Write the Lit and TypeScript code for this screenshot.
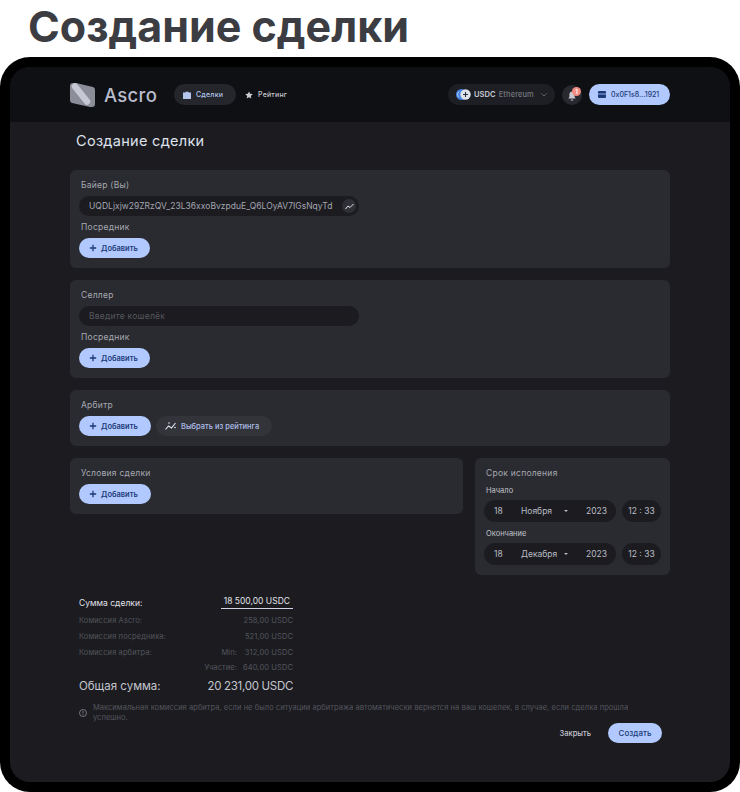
import { LitElement, html, css } from "lit";
import { customElement } from "lit/decorators.js";

const plus = html`<svg class="plus" viewBox="0 0 10 10"><path d="M5 1v8M1 5h8" /></svg>`;

@customElement("app-root")
export class AppRoot extends LitElement {
  static styles = css`
    :host { display: block; width: 740px; height: 792px; overflow: hidden; background: #fff; font-family: Inter, "Noto Sans", sans-serif; }
    * { box-sizing: border-box; }
    h1 { margin: 0; height: 57px; padding-left: 28px; font: 700 43px/52px Inter, "Liberation Sans", sans-serif; color: #3c3d42; white-space: nowrap; }
    .frame { height: 735px; background: #000; border-radius: 30px; padding: 10px; }
    .screen { height: 715px; background: #1b1b20; border-radius: 20px; overflow: hidden; display: flex; flex-direction: column; }
    header { height: 55px; flex: none; background: #0f1014; display: flex; align-items: center; padding: 0 60px; }
    .logo { display: flex; align-items: center; gap: 9px; width: 104px; font-size: 18.5px; font-weight: 500; color: #b9bdcc; letter-spacing: 0.3px; }
    .logo svg { width: 25px; height: 25px; flex: none; }
    .nav { height: 21px; display: flex; align-items: center; gap: 5px; border-radius: 11px; font-size: 7px; font-weight: 500; letter-spacing: .2px; }
    .nav svg { width: 8px; height: 8px; flex: none; }
    .nav.on { width: 62px; padding-left: 9px; background: #25262b; color: #b4c6ee; gap: 5px; }
    .nav.off { margin-left: 9px; color: #c8cad2; gap: 5px; }
    .spacer { flex: 1; }
    .chain { width: 107px; height: 21px; background: #1e1f24; border-radius: 11px; display: flex; align-items: center; padding-left: 8px; font-size: 7.5px; font-weight: 600; color: #c9ccd6; gap: 3px; letter-spacing: .1px; }
    .chain svg.c { width: 15px; height: 11px; flex: none; }
    .chain span { color: #74767f; font-weight: 500; }
    .chain svg.d { width: 6px; height: 4px; margin-left: 4px; }
    .bell { width: 20px; height: 20px; margin-left: 7px; border-radius: 50%; background: #28292e; position: relative; display: flex; align-items: center; justify-content: center; }
    .bell svg { width: 8px; height: 10px; margin-top: 3px; }
    .badge { position: absolute; top: 2px; left: 10px; width: 9px; height: 9px; border-radius: 50%; background: #f28b80; color: #fff; font-size: 6px; line-height: 9px; text-align: center; font-weight: 600; }
    .wallet { width: 81px; height: 21px; margin-left: 7px; background: #b1c9ff; border-radius: 11px; display: flex; align-items: center; padding-left: 9px; gap: 5px; color: #1c3a78; font-size: 7px; font-weight: 500; white-space: nowrap; }
    .wallet svg { width: 8px; height: 7px; flex: none; }
    main { padding: 0 60px; flex: 1; display: flex; flex-direction: column; }
    h2 { margin: 0; height: 48px; padding: 10px 0 0 6px; font-size: 14.5px; line-height: 18px; font-weight: 400; color: #dfe2ec; letter-spacing: .3px; }
    .card { background: #2a2b30; border-radius: 6px; padding: 9px 9px 10px; margin-bottom: 12px; display: flex; flex-direction: column; }
    .lab { height: 12px; padding-left: 2px; font-size: 8.5px; line-height: 12px; color: #a6a8b0; letter-spacing: .25px; }
    .lab.s { margin: 5px 0; }
    .lab.t { margin-bottom: 5px; }
    .input { width: 280px; height: 20px; border-radius: 10px; background: #1b1b20; display: flex; align-items: center; justify-content: space-between; padding: 0 3px 0 10px; font-size: 8.5px; letter-spacing: .03px; color: #a4a6b0; white-space: nowrap; overflow: hidden; }
    .input.ph { color: #56575e; letter-spacing: .22px; }
    .ic { width: 14px; height: 14px; border-radius: 50%; background: #2f3036; display: flex; align-items: center; justify-content: center; flex: none; }
    .ic svg { width: 9px; height: 7px; }
    .btn { width: 71px; height: 20px; border-radius: 10px; background: #b1c9ff; display: flex; align-items: center; padding-left: 10px; gap: 4px; color: #1c3a78; font-size: 7.5px; font-weight: 600; border: 0; }
    .btn.w { width: 72px; }
    .plus { width: 8px; height: 8px; flex: none; }
    .plus path { stroke: #1c3a78; stroke-width: 1.6; fill: none; }
    .rowb { display: flex; gap: 5px; }
    .ghost { width: 116px; height: 20px; border-radius: 10px; background: #33343a; display: flex; align-items: center; padding-left: 9px; gap: 4px; color: #aebfe8; font-size: 7.5px; font-weight: 500; }
    .ghost svg { width: 12px; height: 10px; flex: none; }
    .split { display: flex; gap: 12px; align-items: flex-start; }
    .split .card { margin: 0; }
    .l { width: 393px; }
    .r { width: 195px; }
    .mini { height: 10px; font-size: 7.5px; line-height: 10px; color: #c0c2ca; padding-left: 2px; margin: 7px 0 4px; }
    .dates { display: flex; gap: 6px; }
    .date { width: 132px; height: 22px; border-radius: 11px; background: #1b1b20; display: flex; align-items: center; font-size: 8.5px; color: #b9bbc4; position: relative; }
    .date span { position: absolute; white-space: nowrap; }
    .d1 { left: 10px; }
    .d2 { left: 37px; }
    .d3 { left: 102px; }
    .caret { position: absolute; left: 80px; top: 10px; width: 0; height: 0; border: 2px solid transparent; border-top: 2px solid #b9bbc4; }
    .time { width: 39px; height: 22px; border-radius: 11px; background: #1b1b20; display: flex; align-items: center; justify-content: center; font-size: 8.5px; color: #b9bbc4; }
    .sum { width: 214px; margin: 21px 0 0 9px; display: flex; flex-direction: column; }
    .sr { display: grid; grid-template-columns: 1fr auto; align-items: center; height: 16px; font-size: 7.5px; color: #55565d; letter-spacing: .1px; }
    .sr.last { height: 15px; }
    .sr.main { height: 13px; margin-bottom: 3px; font-size: 8.5px; color: #e1e3ea; font-weight: 400; letter-spacing: 0; }
    .sr.main b { font-weight: 400; border-bottom: 1px solid #cfd3e4; padding: 0 3px 2px 3px; line-height: 10px; letter-spacing: 0; }
    .sr i { font-style: normal; position: relative; white-space: nowrap; }
    .m { position: absolute; right: 56px; }
    .sr.total { height: 18px; margin-top: 2px; font-size: 11.5px; color: #c4c6cf; letter-spacing: 0; }
    .sr.total i { letter-spacing: -.3px; }
    .note { display: flex; gap: 6px; margin: 8px 0 0 9px; width: 552px; align-items: center; font-size: 7.5px; line-height: 10px; color: #55565d; letter-spacing: .05px; }
    .note svg { width: 8px; height: 8px; flex: none; }
    .acts { display: flex; justify-content: flex-end; align-items: center; gap: 17px; padding-right: 8px; }
    .close { font-size: 7.5px; font-weight: 500; color: #c4c6cf; }
    .create { width: 54px; height: 20px; border-radius: 10px; background: #b1c9ff; color: #1c3a78; font-size: 8px; font-weight: 500; display: flex; align-items: center; justify-content: center; }
  `;

  date(d: string, m: string, y: string) {
    return html`<div class="dates"><div class="date"><span class="d1">${d}</span><span class="d2">${m}</span><div class="caret"></div><span class="d3">${y}</span></div><div class="time">12 : 33</div></div>`;
  }

  render() {
    const trend = html`<svg viewBox="0 0 9 7"><path d="M.5 6 3 3l2 1.500L8.500 1" fill="none" stroke="#e4e6ee" stroke-width="1"/></svg>`;
    return html`
      <h1>Создание сделки</h1>
      <div class="frame"><div class="screen">
        <header>
          <div class="logo"><svg viewBox="0 0 25 25">
            <path d="M3 1h3l17 4q2 .5 2 3v14q0 3-3 3h-2L2 21q-2-.5-2-3V4q0-3 3-3z" fill="#8b8e99"/>
            <path d="M5 4.500 17 19.500" stroke="#c6c9d3" stroke-width="6.500" stroke-linecap="round"/>
          </svg>Ascro</div>
          <div class="nav on"><svg viewBox="0 0 8 8"><path d="M2.500 1.500V.8h3v.7H8V8H0V1.500z" fill="#b4c6ee"/></svg>Сделки</div>
          <div class="nav off"><svg viewBox="0 0 10 10"><path d="m5 .5 1.400 3 3.300.4-2.400 2.200.6 3.300L5 7.800 2.100 9.400l.6-3.300L.3 3.900l3.300-.4z" fill="#c8cad2"/></svg>Рейтинг</div>
          <div class="spacer"></div>
          <div class="chain"><svg class="c" viewBox="0 0 15 11"><circle cx="5.500" cy="5.500" r="5.500" fill="#3f7fe0"/><path d="M3 2.500a4 4 0 0 0 0 6" stroke="#e8ebf2" stroke-width=".8" fill="none"/><circle cx="9.500" cy="5.500" r="5.200" fill="#dfe3ec"/><path d="M9.500 3v5M7 5.500h5" stroke="#2b3040" stroke-width="1.100"/></svg>USDC <span>Ethereum</span><svg class="d" viewBox="0 0 6 4"><path d="m.5.5 2.500 2.500L5.500.5" stroke="#74767f" fill="none" stroke-width=".8"/></svg></div>
          <div class="bell"><svg viewBox="0 0 8 10"><path d="M4 .5A2.600 2.600 0 0 0 1.400 3v3L.3 7.500h7.400L6.600 6V3A2.600 2.600 0 0 0 4 .5zM2.800 8.500h2.400v1H2.800z" fill="#c8cad2"/></svg><div class="badge">1</div></div>
          <div class="wallet"><svg viewBox="0 0 8 7"><path d="M1 0h6a1 1 0 0 1 1 1v5a1 1 0 0 1-1 1H1a1 1 0 0 1-1-1V1a1 1 0 0 1 1-1z" fill="#1c3a78"/><path d="M0 3h8" stroke="#b1c9ff" stroke-width=".8"/></svg>0x0F1s8...1921</div>
        </header>
        <main>
          <h2>Создание сделки</h2>
          <div class="card">
            <div class="lab t">Байер (Вы)</div>
            <div class="input">UQDLjxjw29ZRzQV_23L36xxoBvzpduE_Q6LOyAV7IGsNqyTd<div class="ic">${trend}</div></div>
            <div class="lab s">Посредник</div>
            <div class="btn">${plus}Добавить</div>
          </div>
          <div class="card">
            <div class="lab t">Селлер</div>
            <div class="input ph">Введите кошелёк</div>
            <div class="lab s">Посредник</div>
            <div class="btn">${plus}Добавить</div>
          </div>
          <div class="card">
            <div class="lab t">Арбитр</div>
            <div class="rowb"><div class="btn w">${plus}Добавить</div>
            <div class="ghost"><svg viewBox="0 0 12 10"><path d="M.5 8.500 3.500 5 6.500 7 10.500 2" fill="none" stroke="#e4e8f5" stroke-width="1.100"/><circle cx="4" cy="2" r=".8" fill="#e4e8f5"/><circle cx="10" cy="6.500" r=".8" fill="#e4e8f5"/></svg>Выбрать из рейтинга</div></div>
          </div>
          <div class="split">
            <div class="card l">
              <div class="lab t">Условия сделки</div>
              <div class="btn w">${plus}Добавить</div>
            </div>
            <div class="card r">
              <div class="lab">Срок исполения</div>
              <div class="mini">Начало</div>
              ${this.date("18", "Ноября", "2023")}
              <div class="mini">Окончание</div>
              ${this.date("18", "Декабря", "2023")}
            </div>
          </div>
          <div class="sum">
            <div class="sr main"><span>Сумма сделки:</span><b>18 500,00 USDC</b></div>
            <div class="sr"><span>Комиссия Ascro:</span><i>258,00 USDC</i></div>
            <div class="sr"><span>Комиссия посредника:</span><i>521,00 USDC</i></div>
            <div class="sr"><span>Комиссия арбитра:</span><i><span class="m">Min:</span>312,00 USDC</i></div>
            <div class="sr last"><span></span><i><span class="m">Участие:</span>640,00 USDC</i></div>
            <div class="sr total"><span>Общая сумма:</span><i>20 231,00 USDC</i></div>
          </div>
          <div class="note"><svg viewBox="0 0 8 8"><circle cx="4" cy="4" r="3.500" fill="none" stroke="#8b8d95" stroke-width=".8"/><path d="M4 2v2.500M4 5.300v.8" stroke="#8b8d95" stroke-width=".8"/></svg><div>Максимальная комиссия арбитра, если не было ситуации арбитража автоматически вернется на ваш кошелек, в случае, если сделка прошла успешно.</div></div>
          <div class="acts"><div class="close">Закрыть</div><div class="create">Создать</div></div>
        </main>
      </div></div>
    `;
  }
}
